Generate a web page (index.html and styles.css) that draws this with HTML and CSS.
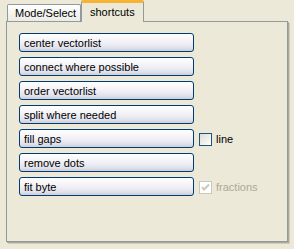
FILE: index.html
```html
<html>

<head>
    <meta charset="utf-8">
    <link rel="stylesheet" href="styles.css">
</head>

<body>
    <div class="tabs">
        <div class="tab">Mode/Select</div>
        <div class="tab active">shortcuts</div>
    </div>
    <div class="panel">
        <div class="row"><button>center vectorlist</button></div>
        <div class="row"><button>connect where possible</button></div>
        <div class="row"><button>order vectorlist</button></div>
        <div class="row"><button>split where needed</button></div>
        <div class="row">
            <button>fill gaps</button>
            <label class="check"><span class="box"></span>line</label>
        </div>
        <div class="row"><button>remove dots</button></div>
        <div class="row">
            <button>fit byte</button>
            <label class="check disabled">
                <span class="box">
                    <svg width="11" height="11" viewBox="0 0 11 11">
                        <path d="M2 5 L4 7.5 L9 2.5" fill="none" stroke="#cac8bb" stroke-width="2"/>
                    </svg>
                </span>fractions
            </label>
        </div>
    </div>
</body>

</html>
```

FILE: styles.css
```css
html {
    background-color: #ece9d8;
}

body {
    margin: 0;
    font-family: "Liberation Sans", Arial, sans-serif;
    font-size: 11px;
    color: #000;
}

.tabs {
    display: flex;
    align-items: flex-end;
    padding: 4px 0 0 7px;
    height: 21px;
    box-sizing: border-box;
}

.tab {
    height: 17px;
    width: 74px;
    box-sizing: border-box;
    border: 1px solid #919b9c;
    border-bottom: none;
    border-radius: 2px 2px 0 0;
    padding: 2px 0 0 7px;
    background: linear-gradient(#fefefe, #ecebe6);
}

.tab.active {
    height: 22px;
    width: 63px;
    margin-bottom: -1px;
    padding: 3px 0 0 8px;
    border-top: 3px solid #f7b334;
    background: #ece9d8;
    position: relative;
    z-index: 1;
}

.panel {
    margin-left: 6px;
    width: 282px;
    height: 221px;
    box-sizing: border-box;
    border: 1px solid #919b9c;
    box-shadow: 1px 1px 0 #aca899, 2px 2px 0 #d0cdc0;
    padding: 11px 0 0 12px;
    display: flex;
    flex-direction: column;
    gap: 5px;
}

.row {
    display: flex;
    align-items: center;
    height: 19px;
}

button {
    width: 175px;
    height: 19px;
    margin: 0;
    padding: 0 0 0 4px;
    text-align: left;
    font: inherit;
    color: #000;
    border: 1px solid #003c74;
    border-radius: 3px;
    background: linear-gradient(#ffffff 0%, #f4f4f8 40%, #e2e2ec 80%, #cfcfdc 100%);
}

.check {
    display: flex;
    align-items: center;
    margin-left: 5px;
    margin-top: 1px;
}

.box {
    width: 13px;
    height: 13px;
    box-sizing: border-box;
    border: 1px solid #1c5180;
    background: linear-gradient(135deg, #dcdcd7, #ffffff);
    margin-right: 4px;
    display: flex;
}

.check.disabled {
    color: #aca899;
}

.check.disabled .box {
    border-color: #cac8bb;
    background: #ffffff;
}
```
